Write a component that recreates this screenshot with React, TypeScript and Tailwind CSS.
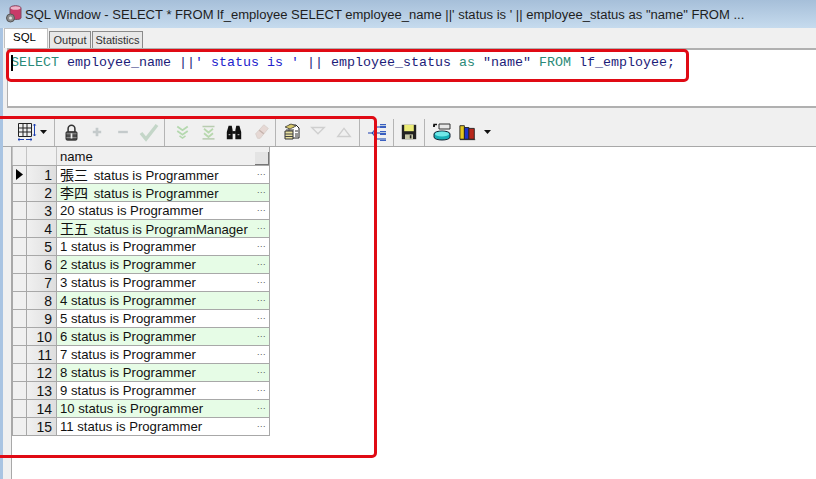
import type {FC, ReactNode} from 'react';

const rows: [string, string][] = [
    ['張三', ' status is Programmer'],
    ['李四', ' status is Programmer'],
    ['', '20 status is Programmer'],
    ['王五', ' status is ProgramManager'],
    ['', '1 status is Programmer'],
    ['', '2 status is Programmer'],
    ['', '3 status is Programmer'],
    ['', '4 status is Programmer'],
    ['', '5 status is Programmer'],
    ['', '6 status is Programmer'],
    ['', '7 status is Programmer'],
    ['', '8 status is Programmer'],
    ['', '9 status is Programmer'],
    ['', '10 status is Programmer'],
    ['', '11 status is Programmer'],
];

const Tool: FC<{className?: string; children: ReactNode}> = ({className = 'w-[26px]', children}) => (
    <div className={`${className} h-[24px] mb-[2px] flex items-center justify-center shrink-0`}>{children}</div>
);

const Sep: FC<{className?: string}> = ({className = ''}) => <div className={`${className} w-px h-[27px] bg-[#b4b4b4] shrink-0`}/>;

const Icon: FC<{children: ReactNode; size?: number}> = ({children, size = 20}) => (
    <svg width={size} height={size} viewBox="0 0 20 20" fill="none">{children}</svg>
);

const DownArrow: FC = () => (
    <svg width="7" height="4" viewBox="0 0 7 4"><path d="M0 0h7L3.500 4z" fill="#111"/></svg>
);

const Toolbar: FC = () => (
    <div className="h-[39px] pl-[13px] flex items-end bg-[#f0f0f0] border-b border-[#a8a8a8]">
        <Tool className="w-[22px]">
            <Icon>
                <path d="M1.500 1.500h13v13h-13zM1.500 6h13M1.500 10h13M6 1.500v13M10 1.500v13" stroke="#222"/>
                <path d="M17.500 2v12M16.300 3.500 17.500 2l1.200 1.500M16.300 12.500 17.500 14l1.200-1.500" stroke="#1c3fb0"/>
                <path d="M1 17.500h6M9 17.500h6M2.500 16.300 1 17.500l1.500 1.200M13.500 16.300 15 17.500l-1.500 1.200" stroke="#1c3fb0"/>
            </Icon>
        </Tool>
        <Tool className="w-[11px]"><DownArrow/></Tool>
        <Sep className="ml-[5px]"/>
        <Tool className="w-[26px] ml-[3px]">
            <Icon size={17}>
                <path d="M6 9V5.500a4 4 0 0 1 8 0V9" stroke="#333" strokeWidth="1.800"/>
                <rect x="3.500" y="9" width="13" height="10" rx="1.500" fill="#4a4a4a" stroke="#222"/>
                <path d="M4 11.500h12M4 16h12" stroke="#9a9a9a"/>
                <rect x="9" y="11" width="2" height="6" fill="#eee"/>
            </Icon>
        </Tool>
        <Tool><Icon size={12}><path d="M10 3v14M3 10h14" stroke="#c4cacb" strokeWidth="4.500"/></Icon></Tool>
        <Tool><Icon size={12}><path d="M2 10h16" stroke="#c4cacb" strokeWidth="4"/></Icon></Tool>
        <Tool><Icon><path d="M2 11l5 6L18 3" stroke="#c4d6c8" strokeWidth="3.500"/></Icon></Tool>
        <Sep className="ml-[2px]"/>
        <Tool className="w-[26px] ml-[4px]">
            <Icon size={15}>
                <path d="M3 2l7 5 7-5M3 8l7 5 7-5" stroke="#b4d8ae" strokeWidth="2.400"/>
                <path d="M6 14.500l4 3 4-3" stroke="#b4d8ae" strokeWidth="2"/>
            </Icon>
        </Tool>
        <Tool>
            <Icon size={15}>
                <path d="M2 2h16" stroke="#b8ccb0" strokeWidth="2"/>
                <path d="M4 5l6 5 6-5M4 11l6 5 6-5" stroke="#b8d8ae" strokeWidth="2.400"/>
                <path d="M2 18.500h16" stroke="#b8ccb0" strokeWidth="2"/>
            </Icon>
        </Tool>
        <Tool>
            <Icon size={18}>
                <path d="M2 18V10l2-7h3.500l1 5v10zM18 18V10l-2-7h-3.500l-1 5v10z" fill="#111"/>
                <path d="M8 9h4v3H8z" fill="#111"/>
                <path d="M4 13h2M14 13h2" stroke="#ddd"/>
            </Icon>
        </Tool>
        <Tool className="w-[26px] ml-[2px]">
            <Icon size={18}>
                <path d="M3 12l9-10 5 4-9 11H5z" fill="#e6d8d4" stroke="#d8cfcb"/>
                <path d="M7 8l5 4" stroke="#c4b2ac" strokeWidth="1.500"/>
            </Icon>
        </Tool>
        <Sep/>
        <Tool className="w-[26px] ml-[3px]">
            <Icon>
                <path d="M7 3h7l3 3v10H7z" fill="#fff" stroke="#222"/>
                <path d="M4 5h8M4 8h8" stroke="#777" strokeWidth="1.500"/>
                <path d="M3 5l6-3 5 2-6 3z" fill="#d8c86a" stroke="#333" strokeWidth=".7"/>
                <path d="M3 9h8v8H3z" fill="#e8e0a0" stroke="#333"/>
                <path d="M3 12h8M3 14.500h8" stroke="#444"/>
                <path d="M13 9h3M13 12h3M13 14h3" stroke="#333"/>
            </Icon>
        </Tool>
        <Tool><Icon size={18}><path d="M3 5h14l-7 7z" stroke="#cfcfcf" strokeWidth="1.500"/></Icon></Tool>
        <Tool><Icon size={18}><path d="M3 15h14l-7-9z" stroke="#cfcfcf" strokeWidth="1.500"/></Icon></Tool>
        <Sep className="ml-[2px]"/>
        <Tool className="w-[26px] ml-[4px]">
            <Icon>
                <path d="M1 11h8M5 11l5-6h3M5 11l5 6h3M9 11h4" stroke="#1c3fb0"/>
                <path d="M13 2h6v4h-6zM13 9h6v4h-6zM13 16h6v3h-6z" fill="#3a5fc0"/>
                <path d="M13 3.500h6M13 10.500h6M13 17h6" stroke="#bcd"/>
            </Icon>
        </Tool>
        <Sep className="ml-[3px]"/>
        <Tool className="w-[26px] ml-[2px]">
            <Icon size={16}>
                <path d="M1 1h18v18H1z" fill="#222"/>
                <path d="M4 1h12v8H4z" fill="#ecec78"/>
                <path d="M5 13h10v6H5z" fill="#c8c8a8"/>
                <path d="M11 14h2v4h-2z" fill="#222"/>
            </Icon>
        </Tool>
        <Sep className="ml-[2px]"/>
        <Tool className="w-[34px]">
            <Icon>
                <path d="M7 2h11v5H7z" fill="#e8e8e8" stroke="#333"/>
                <path d="M2 5V2.500h3M1 4h2" stroke="#111" strokeWidth="1.500"/>
                <path d="M2 12c0-4 16-4 16 0v3c0 4-16 4-16 0z" fill="#18b0b8" stroke="#123"/>
                <ellipse cx="10" cy="12" rx="7" ry="2.500" fill="#70e8e8"/>
            </Icon>
        </Tool>
        <Tool className="w-[18px]">
            <Icon>
                <path d="M1 3h5v15H1z" fill="#e4c820" stroke="#222"/>
                <path d="M6 5h5v13H6z" fill="#1c34c8" stroke="#222"/>
                <path d="M11 6h6v12h-6z" fill="#b8281c" stroke="#222"/>
                <path d="M1 18.500h17" stroke="#222"/>
            </Icon>
        </Tool>
        <Tool className="w-[16px] ml-[2px]"><DownArrow/></Tool>
    </div>
);

const Grid: FC = () => (
    <div className="w-[258px] border-r border-[#a8a8a8] text-[13.150px] leading-[18px] text-[#111]">
        <div className="flex h-[19px] border-b border-[#a8a8a8] bg-[#f0f0f0]">
            <div className="w-[15px] border-r border-l border-[#c4c4c4]"/>
            <div className="w-[30px] border-r border-[#c4c4c4]"/>
            <div className="flex-1 pl-[3px] pt-[1px] relative">
                name
                <div className="absolute right-0 bottom-0 w-[14px] h-[13px] bg-[#e4e4e4] border-r border-b border-[#777]"/>
            </div>
        </div>
        {rows.map(([cjk, text], i) => (
            <div key={i} className="flex h-[18px]">
                <div className="w-[15px] border-l border-r border-b border-[#a8a8a8] bg-[#f0f0f0] flex items-center justify-center">
                    {i === 0 && <svg width="7" height="11" viewBox="0 0 7 11"><path d="M0 0l7 5.500L0 11z" fill="#000"/></svg>}
                </div>
                <div className="w-[30px] border-r border-b border-[#a8a8a8] bg-gradient-to-r from-[#f0f0f0] to-[#dedede] pr-[4px] text-right text-[14px]">{i + 1}</div>
                <div className={`flex-1 flex border-b border-[#a8a8a8] pl-[3px] ${i % 2 === 1 ? 'bg-[#e6fce6]' : 'bg-white'}`}>
                    <span className="flex-1 whitespace-pre">
                        {cjk && <span className="text-[14px] mr-[2px]">{cjk}</span>}
                        {text}
                    </span>
                    <span className="w-[12px] text-[9px] leading-[12px] text-[#555] tracking-[0.5px]">...</span>
                </div>
            </div>
        ))}
    </div>
);

export default function App() {
    return (
        <div className="relative w-[816px] h-[479px] overflow-hidden flex flex-col bg-[#f0f0f0] font-['Liberation_Sans','Noto_Sans_CJK_JP',sans-serif]">
            <div className="h-[28px] shrink-0 flex items-center pl-[6px] gap-[3px] bg-gradient-to-b from-[#a6bfd9] to-[#c6dbee] text-[13.050px] text-[#1e1e1e]">
                <svg width="16" height="18" viewBox="0 0 16 18">
                    <path d="M4 3c0-3 11-3 11 0v10c0 2-11 2-11 0z" fill="#c83a68" stroke="#7a4a60"/>
                    <ellipse cx="9.500" cy="3" rx="5" ry="1.800" fill="#ecb4c8"/>
                    <circle cx="4.500" cy="13" r="4" fill="#8a8a8a" stroke="#555"/>
                    <circle cx="4.500" cy="13" r="1.500" fill="#e0e0e0"/>
                </svg>
                <span className="whitespace-nowrap pt-[2px]">SQL Window - SELECT * FROM lf_employee SELECT employee_name ||' status is ' || employee_status as "name" FROM ...</span>
            </div>
            <div className="flex-1 flex min-h-0">
                <div className="w-[3px] bg-[#a9c4e2] shrink-0"/>
                <div className="flex-1 flex flex-col min-w-0">
                    <div className="h-[20px] shrink-0 flex items-end pl-[1px]">
                        <div className="w-[44px] h-[20px] pl-[8px] pt-[1px] bg-white text-[11.500px] leading-[15px] border-t border-l border-r border-[#c0c0c0]">SQL</div>
                        <div className="w-[42px] h-[17px] ml-[1px] text-center bg-[#e8e8e8] text-[11px] leading-[16px] text-[#333] border-t border-l border-r border-[#8a8a8a]">Output</div>
                        <div className="w-[51px] h-[17px] ml-[1px] text-center bg-[#e8e8e8] text-[11px] leading-[16px] text-[#333] border-t border-l border-r border-[#8a8a8a]">Statistics</div>
                    </div>
                    <div className="h-[60px] shrink-0 ml-[4px] pl-[3px] pt-[5px] bg-white border-t-2 border-l border-b-2 border-[#b0b0b0] font-['Liberation_Mono',monospace] text-[13.33px] leading-[16px] whitespace-nowrap text-[#1c1c78]">
                        <span className="relative text-[#2a8a78]">
                            <span className="absolute left-0 top-0 w-[2px] h-[16px] bg-black"/>SELECT
                        </span> employee_name ||<span className="text-[#2222cc]">' status is '</span> || employee_status <span className="text-[#2a8a78]">as</span> "name" <span className="text-[#2a8a78]">FROM</span> lf_employee;
                    </div>
                    <Toolbar/>
                    <div className="flex-1 ml-[8px] bg-white border-l border-[#a8a8a8]"><Grid/></div>
                </div>
            </div>
            {/* red annotation boxes */}
            <div className="absolute left-[6px] top-[49px] w-[683px] h-[33px] border-[3px] border-[#e00a14] rounded-[5px]"/>
            <div className="absolute -left-[8px] top-[116px] w-[385px] h-[342px] border-[3px] border-[#e00a14] rounded-[5px]"/>
        </div>
    );
}
